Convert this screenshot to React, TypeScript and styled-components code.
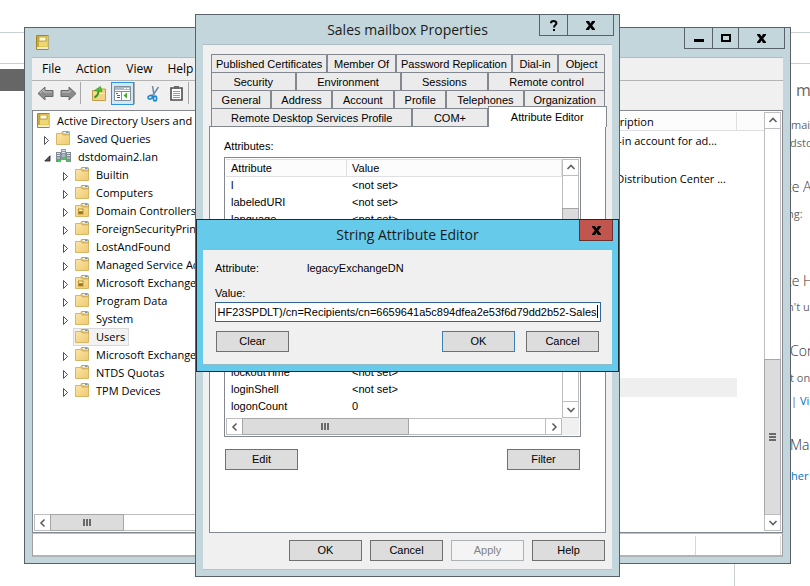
import React, { useEffect, useRef } from 'react';
import styled, { createGlobalStyle, css } from 'styled-components';

const uiFont = '"Open Sans", "Noto Sans", sans-serif';
const dialogFont = '"Liberation Sans", Arial, sans-serif';
const frame = '#c3d6dc';
const frameLine = '#5a616b';
const paneLine = '#828790';

const GlobalStyle = createGlobalStyle`
  * { box-sizing: border-box; }
  body { margin: 0; background: #fff; color: #000; font-family: ${uiFont}; font-size: 11px; }
  button, input { font: inherit; color: inherit; }
  button { padding: 0; border: 0; background: none; }
  svg { display: block; flex: none; }
`;

const Desktop = styled.div`
  position: relative;
  min-height: 100vh;
  overflow: hidden;
`;

/* ---------- web page behind the windows ---------- */

const Page = styled.div`
  display: flex;
  flex-direction: column;
  height: 100vh;
`;

const PageRule = styled.div<{ $height: number }>`
  height: ${(p) => p.$height}px;
  border-bottom: 1px solid #c8d0d4;
`;

const PageBody = styled.div`
  display: flex;
  flex: 1;
  min-height: 0;
  justify-content: space-between;
`;

const PageBar = styled.div`
  width: 60px;
  height: 22px;
  margin-top: 5px;
  background: #666;
`;

const PageColumn = styled.aside`
  width: 76px;
  margin-top: 14px;
  padding-left: 52px;
  border-left: 1px solid #c8d0d4;
  overflow: hidden;
  white-space: nowrap;
  color: #666;
`;

const PageText = styled.p<{ $indent?: number; $gap: number }>`
  margin: ${(p) => p.$gap}px 0 0 ${(p) => p.$indent ?? 0}px;
  font-size: 11px;
  line-height: 18px;
`;

const PageHeading = styled.h3<{ $indent?: number; $gap: number; $large?: boolean }>`
  margin: ${(p) => p.$gap}px 0 0 ${(p) => p.$indent ?? 0}px;
  font-size: ${(p) => (p.$large ? 16 : 14)}px;
  font-weight: ${(p) => (p.$large ? 400 : 300)};
  line-height: 20px;
  color: ${(p) => (p.$large ? '#666' : '#333')};
`;

const PageLink = styled.a`
  color: #0072c6;
  text-decoration: none;
`;

/* ---------- window frames ---------- */

const WindowBox = styled.section`
  position: absolute;
  display: flex;
  flex-direction: column;
  padding: 0 7px 6px;
  border: 1px solid ${frameLine};
  background: ${frame};
`;

const ConsoleWindow = styled(WindowBox)`
  inset: 27px 19px 22px 24px;
`;

const PropertiesWindow = styled(WindowBox)`
  top: 14px;
  left: 195px;
  right: 190px;
  font-family: ${dialogFont};
`;

const EditorWindow = styled(WindowBox)`
  top: 219px;
  left: 196px;
  right: 191px;
  padding: 0 6px 6px;
  border-color: #1d2b33;
  background: #66cbea;
  font-family: ${dialogFont};
`;

const TitleBar = styled.header`
  position: relative;
  display: flex;
  align-items: center;
  height: 29px;
`;

const WindowIcon = styled.span`
  padding-left: 4px;
`;

const Title = styled.h1`
  flex: 1;
  margin: 0;
  font: 400 14px/20px ${uiFont};
  text-align: center;
  color: #1a1a1a;
`;

const Caption = styled.div<{ $red?: boolean }>`
  position: absolute;
  top: 0;
  right: -2px;
  display: flex;
  border: 1px solid ${(p) => (p.$red ? '#6b3030' : frameLine)};
  border-top: 0;
  background: ${(p) => (p.$red ? '#c2564e' : 'transparent')};
`;

const EditorCaption = styled(Caption)`
  right: -1px;
`;

const CaptionButton = styled.button<{ $width: number }>`
  display: grid;
  place-items: center;
  width: ${(p) => p.$width}px;
  height: 20px;
  & + & { border-left: 1px solid ${frameLine}; }
`;

const Client = styled.div`
  display: flex;
  flex: 1;
  flex-direction: column;
  min-height: 0;
  border-top: 1px solid #aebcc4;
  background: #f0f0f0;
`;

/* ---------- management console ---------- */

const MenuBar = styled.nav`
  display: flex;
  height: 23px;
  padding-left: 2px;
  border-bottom: 1px solid #b4b4b4;
`;

const MenuItem = styled.button`
  padding: 0 7px 0 8px;
  font-size: 12px;
  line-height: 22px;
`;

const ToolBar = styled.div`
  display: flex;
  height: 29px;
  padding: 1px 0 0 2px;
`;

const Tool = styled.button<{ $active?: boolean; $width?: number }>`
  display: grid;
  place-items: center;
  width: ${(p) => p.$width ?? 23}px;
  height: 23px;
  ${(p) =>
    p.$active &&
    css`
      border: 1px solid #2c95dc;
      background: #d2e8f6;
    `}
`;

const ToolSeparator = styled.span<{ $gap: number }>`
  width: 1px;
  height: 22px;
  margin-right: ${(p) => p.$gap}px;
  background: #a8a8a8;
`;

const Panes = styled.div`
  display: flex;
  flex: 1;
  gap: 4px;
  min-height: 0;
`;

const Pane = styled.div`
  display: flex;
  min-width: 0;
  padding: 1px;
  border: 1px solid ${paneLine};
  background: #fff;
`;

const TreePane = styled(Pane)`
  flex: 3;
  flex-direction: column;
  justify-content: space-between;
`;

const ListPane = styled(Pane)`
  flex: 7;
`;

const Tree = styled.ul`
  margin: 0;
  padding: 0 0 0 1px;
  list-style: none;
  overflow: hidden;
  white-space: nowrap;
`;

const TreeItem = styled.li<{ $level: number }>`
  display: flex;
  align-items: center;
  height: 18px;
  padding-left: ${(p) => (p.$level === 0 ? 0 : p.$level * 19 - 10)}px;
`;

const Twisty = styled.span`
  display: flex;
  width: 10px;
  padding-top: 3px;
`;

const TreeLabel = styled.span<{ $selected?: boolean }>`
  display: flex;
  align-items: center;
  gap: 7px;
  height: 18px;
  padding: 0 3px 2px 1px;
  border: 1px solid ${(p) => (p.$selected ? '#d9d9d9' : 'transparent')};
  background: ${(p) => (p.$selected ? '#f2f2f2' : 'transparent')};
`;

const AccountTable = styled.table`
  width: 100%;
  border-collapse: separate;
  border-spacing: 0;
  table-layout: fixed;
  white-space: nowrap;
`;

const AccountHead = styled.th<{ $width?: number }>`
  width: ${(p) => (p.$width ? `${p.$width}px` : 'auto')};
  height: 19px;
  padding: 0 6px;
  border-right: 1px solid #dedede;
  border-bottom: 1px solid #dedede;
  background: #fcfcfc;
  font-weight: 400;
  text-align: left;
  &:last-child { border-right: 0; }
`;

const AccountCell = styled.td<{ $selected?: boolean }>`
  height: 19px;
  padding: 0 6px;
  line-height: 17px;
  background: ${(p) => (p.$selected ? '#efefef' : 'transparent')};
  &:last-child { background: transparent; }
`;

const ListArea = styled.div`
  flex: 1;
  min-width: 0;
  overflow: hidden;
`;

const StatusBar = styled.footer`
  display: flex;
  justify-content: flex-end;
  height: 24px;
  padding: 2px 1px 0 0;
  border: 1px solid #a0a0a0;
  border-top-color: #c0c0c8;
  border-bottom: 2px solid #b0b4b8;
  background: #fff;
`;

const StatusPart = styled.span`
  width: 86px;
  border-left: 1px solid #d7d7d7;
  border-right: 1px solid #d7d7d7;
`;

/* ---------- scroll bars ---------- */

const ScrollTrack = styled.div<{ $vertical?: boolean }>`
  display: flex;
  flex: none;
  flex-direction: ${(p) => (p.$vertical ? 'column' : 'row')};
  ${(p) => (p.$vertical ? 'width: 17px;' : 'height: 17px;')}
  border: 1px solid #bdbdbd;
  background: #fff;
`;

const ScrollButton = styled.button<{ $vertical?: boolean; $end?: boolean }>`
  display: grid;
  flex: none;
  place-items: center;
  ${(p) => (p.$vertical ? 'height: 16px;' : 'width: 16px;')}
  border: 0 solid #bdbdbd;
  ${(p) =>
    p.$vertical
      ? p.$end
        ? 'border-top-width: 1px;'
        : 'border-bottom-width: 1px;'
      : p.$end
        ? 'border-left-width: 1px;'
        : 'border-right-width: 1px;'}
`;

const ScrollSpace = styled.span<{ $grow: number }>`
  flex: ${(p) => p.$grow} 1 0;
`;

const ScrollThumb = styled.span<{ $grow: number }>`
  display: grid;
  flex: ${(p) => p.$grow} 1 0;
  place-items: center;
  margin: -1px;
  border: 1px solid #a6a6a6;
  background: #dcdcdc;
`;

/* ---------- dialogs ---------- */

const PropertiesClient = styled(Client)`
  padding: 9px 6px 8px;
  border-bottom: 1px solid #b4c4ca;
`;

const TabRows = styled.div`
  padding: 0 1px 0 2px;
`;

const TabRow = styled.div`
  display: flex;
  height: 18px;
`;

const Tab = styled.button<{ $grow: number; $selected?: boolean }>`
  flex: ${(p) => p.$grow} 1 0;
  min-width: 0;
  border: 1px solid ${paneLine};
  border-bottom: 0;
  background: #ebebeb;
  white-space: nowrap;
  line-height: 18px;
  ${(p) =>
    p.$selected &&
    css`
      z-index: 1;
      margin: -2px -2px -1px 0;
      background: #fff;
    `}
`;

const TabPanel = styled.div`
  padding: 11px 24px 62px 14px;
  border: 1px solid ${paneLine};
  background: #fff;
`;

const FieldName = styled.div`
  height: 16px;
  margin-bottom: 3px;
  line-height: 16px;
`;

const AttributeBox = styled.div`
  display: grid;
  grid-template-columns: 1fr 17px;
  padding: 1px;
  border: 1px solid ${paneLine};
`;

const AttributeTable = styled.table`
  width: 100%;
  padding-bottom: 3px;
  border-collapse: separate;
  border-spacing: 0;
  table-layout: fixed;
`;

const AttributeHead = styled.th<{ $width?: number }>`
  width: ${(p) => (p.$width ? `${p.$width}px` : 'auto')};
  height: 18px;
  padding: 0 5px;
  border: 1px solid #e0e0e0;
  border-left-width: 0;
  background: #fcfcfc;
  font-weight: 400;
  text-align: left;
`;

const AttributeCell = styled.td`
  height: 17px;
  padding: 0 5px;
  line-height: 17px;
`;

const ScrollCorner = styled.span`
  background: #f0f0f0;
`;

const ButtonRow = styled.div<{ $top: number; $gap?: number; $align?: string }>`
  display: flex;
  justify-content: ${(p) => p.$align ?? 'space-between'};
  gap: ${(p) => p.$gap ?? 0}px;
  margin-top: ${(p) => p.$top}px;
  padding: 0 1px;
`;

const PushButton = styled.button<{ $primary?: boolean }>`
  width: 73px;
  height: 21px;
  border: 1px solid ${(p) => (p.$primary ? '#3c7fb1' : '#707070')};
  background: #ddd;
  line-height: 19px;
  &:disabled {
    border-color: #adb2b5;
    background: #f4f4f4;
    color: #838383;
  }
`;

const EditorClient = styled(Client)`
  padding: 10px 11px 12px 12px;
  border: 1px solid #8db9cb;
  border-width: 1px 0;
`;

const EditorFields = styled.form`
  display: flex;
  flex-direction: column;
`;

const EditorLine = styled.div`
  display: flex;
  margin-bottom: 9px;
  line-height: 16px;
`;

const AttributeLabel = styled.span`
  width: 92px;
`;

const ValueLabel = styled.label`
  line-height: 17px;
`;

const ValueBox = styled.div`
  position: relative;
  display: flex;
`;

const ValueInput = styled.input`
  width: 100%;
  height: 20px;
  padding: 0 3px 0 2px;
  border: 1px solid #2f6597;
  border-radius: 0;
  outline: 0;
  background: #fff;
  caret-color: transparent;
`;

const Caret = styled.span`
  position: absolute;
  top: 3px;
  right: 3px;
  width: 1px;
  height: 13px;
  background: #000;
`;

const EditorButtons = styled(ButtonRow)`
  padding-right: 2px;
`;

const RightButtons = styled.div`
  display: flex;
  gap: 11px;
`;

/* ---------- drawings ---------- */

const CloseGlyph = () => (
  <svg width="9" height="9" viewBox="0 0 9 9">
    <path d="M0 0H3L4.500 2.500L6 0H9V1L6.200 4.500L9 8V9H6L4.500 6.500L3 9H0V8L2.800 4.500L0 1Z" fill="#000" />
  </svg>
);

const MinimizeGlyph = () => (
  <svg width="10" height="9" viewBox="0 0 10 9">
    <path d="M0 5H10V8H0Z" fill="#000" />
  </svg>
);

const MaximizeGlyph = () => (
  <svg width="10" height="8" viewBox="0 0 10 8">
    <path d="M1 1H9V7H1Z" fill="none" stroke="#000" strokeWidth="2" />
  </svg>
);

const HelpGlyph = () => (
  <svg width="8" height="11" viewBox="0 0 8 11">
    <path d="M1 3.2C1 .4 6.4.4 6.4 3.2C6.4 5 4 5 4 7.4" fill="none" stroke="#000" strokeWidth="2" />
    <path d="M3 9H5V11H3Z" fill="#000" />
  </svg>
);

const arrows = {
  up: 'M1.5 6L5 2.5L8.5 6',
  down: 'M1.5 3L5 6.5L8.5 3',
  left: 'M6.5 1.5L3 5L6.5 8.5',
  right: 'M3.5 1.5L7 5L3.5 8.5',
};

const Chevron = ({ to }: { to: keyof typeof arrows }) => (
  <svg width="10" height="10" viewBox="0 0 10 10">
    <path d={arrows[to]} fill="none" stroke="#606060" strokeWidth="1.6" />
  </svg>
);

const Grip = ({ vertical }: { vertical?: boolean }) => (
  <svg width="8" height="8" viewBox="0 0 8 8" shapeRendering="crispEdges">
    <path d={vertical ? 'M0 0H7V2H0ZM0 3H7V5H0ZM0 6H7V8H0Z' : 'M0 0H2V7H0ZM3 0H5V7H3ZM6 0H8V7H6Z'} fill="#6a6a6a" />
  </svg>
);

const BookIcon = () => (
  <svg width="13" height="15" viewBox="0 0 13 15">
    <path d="M0 1Q0 0 1 0H12.500V15H1Q0 15 0 14Z" fill="#a5862a" />
    <path d="M1 1H12V12H1Z" fill="#e3c95c" />
    <path d="M1 1H3V12H1Z" fill="#c9a83c" />
    <path d="M1 12H12V14H1Z" fill="#f3ecc8" />
    <path d="M3 2H10V6H3Z" fill="#fdf8dc" stroke="#b89a3a" strokeWidth=".8" />
    <path d="M3 7H11V11H3Z" fill="#edd874" />
  </svg>
);

const FolderIcon = ({ unit }: { unit?: boolean }) => (
  <svg width="14" height="14" viewBox="0 0 14 14">
    <defs>
      <linearGradient id="folder" x1="0" y1="0" x2="1" y2="1">
        <stop offset="0" stopColor="#fbe6a6" />
        <stop offset="1" stopColor="#efc970" />
      </linearGradient>
    </defs>
    <path d="M6 3V1.500Q6 .5 7 .5H12.500Q13.500 .5 13.500 1.500V4Z" fill="#f3dc9a" stroke="#c7a04c" />
    <path d="M8 1H10V2H8Z" fill="#fff" />
    <path d="M10 1H12.500V2H10Z" fill="#5b9bc8" />
    <path d="M.5 2.500H5.500L7 4H13.500V13.500H.5Z" fill="url(#folder)" stroke="#d9b566" />
    {unit && (
      <>
        <path d="M3 5.500H8.500V11.500H3Z" fill="#b8912a" />
        <path d="M4 6.500H7.500V8H4Z" fill="#fff3b0" />
        <path d="M4 9H7.500V10.500H4Z" fill="#8f6e16" />
      </>
    )}
  </svg>
);

const DomainIcon = () => (
  <svg width="15" height="14" viewBox="0 0 15 14">
    <path d="M5 0H10V11H5Z" fill="#8b979f" />
    <path d="M6 1H9V2H6ZM6 3H9V4H6Z" fill="#e4ecf0" />
    <path d="M0 3H5V13H0ZM10 3H15V13H10Z" fill="#7d8a93" />
    <path d="M1 4H4V5H1ZM1 6H4V7H1ZM11 4H14V5H11ZM11 6H14V7H11Z" fill="#dfe8ec" />
    <path d="M1 8H4V10H1ZM11 8H14V10H11ZM6 5H9V8H6Z" fill="#aab5bc" />
    <path d="M2 11H5V13H2ZM7 9H9V11H7ZM11 11H14V13H11Z" fill="#35d435" />
  </svg>
);

const ClosedTwisty = () => (
  <svg width="6" height="9" viewBox="0 0 6 9">
    <path d="M.5 .5V8.500L4.500 4.500Z" fill="#fff" stroke="#404040" strokeWidth=".9" />
  </svg>
);

const OpenTwisty = () => (
  <svg width="7" height="7" viewBox="0 0 7 7">
    <path d="M6 .8V6H.8Z" fill="#595959" stroke="#262626" strokeWidth=".9" />
  </svg>
);

const ArrowIcon = ({ forward }: { forward?: boolean }) => (
  <svg width="17" height="15" viewBox="0 0 17 15">
    <path
      d={forward ? 'M16 7.500L9 1V4.500H1V10.500H9V14Z' : 'M1 7.500L8 1V4.500H16V10.500H8V14Z'}
      fill="#8c8c8c"
      stroke="#6a6a6a"
      strokeLinejoin="round"
    />
    <path d={forward ? 'M2 6H10V4' : 'M3 7L7 3.500V6H15'} fill="none" stroke="#c4c4c4" />
  </svg>
);

const FolderUpIcon = () => (
  <svg width="16" height="15" viewBox="0 0 16 15">
    <path d="M1.500 4.500H6L7 3H14.500V14.500H1.500Z" fill="#f3d287" stroke="#c39c46" />
    <path d="M2 7H14V8H2Z" fill="#fbe9b4" />
    <path d="M3.500 11.500Q7.500 9.500 7.500 5" fill="none" stroke="#2f9e1c" strokeWidth="2" />
    <path d="M3.500 4.500L9.500 .5L11 5.500Z" fill="#49c22c" stroke="#2c8c1a" strokeWidth=".6" />
  </svg>
);

const ConsoleTreeIcon = () => (
  <svg width="17" height="15" viewBox="0 0 17 15">
    <path d="M.5 .5H16.500V14.500H.5Z" fill="#fff" stroke="#82909c" />
    <path d="M1 1H16V4H1Z" fill="#aebbc6" />
    <path d="M10 2H12V3H10ZM13 2H15V3H13Z" fill="#fff" />
    <path d="M0 5.500H17" stroke="#82909c" />
    <path d="M7.500 6V14" stroke="#82909c" />
    <path d="M2 7H4V8H2ZM3 9H6V10H3ZM3 11H6V12H3Z" fill="#2e6db5" />
    <path d="M13 6.500V12.500L9.500 9.500Z" fill="#3bb026" />
  </svg>
);

const ScissorsIcon = () => (
  <svg width="13" height="16" viewBox="0 0 13 16">
    <path d="M5.500 0L7 9M11.500 1L5 10.500" fill="none" stroke="#6b8ba3" strokeWidth="1.500" />
    <ellipse cx="3.300" cy="11.300" rx="2.300" ry="1.700" fill="none" stroke="#1d86d1" strokeWidth="1.600" transform="rotate(-25 3.300 11.300)" />
    <ellipse cx="8" cy="12.500" rx="1.600" ry="2.400" fill="none" stroke="#1d86d1" strokeWidth="1.600" />
  </svg>
);

const ClipboardIcon = () => (
  <svg width="13" height="15" viewBox="0 0 13 15">
    <path d="M1 2H12V14H1Z" fill="#fff" stroke="#4d4d4d" strokeWidth="1.600" />
    <path d="M4 0H9V3H4Z" fill="#6a6a6a" />
    <path d="M3 5.500H10M3 7.500H10M3 9.500H10M3 11.500H10" stroke="#9a9a9a" />
  </svg>
);

/* ---------- composed parts ---------- */

type BarProps = { vertical?: boolean; before?: number; thumb: number; after: number };

const ScrollBar = ({ vertical, before = 0, thumb, after }: BarProps) => (
  <ScrollTrack $vertical={vertical}>
    <ScrollButton type="button" $vertical={vertical} aria-label={vertical ? 'Scroll up' : 'Scroll left'}>
      <Chevron to={vertical ? 'up' : 'left'} />
    </ScrollButton>
    {before > 0 && <ScrollSpace $grow={before} />}
    <ScrollThumb $grow={thumb}>
      <Grip vertical={vertical} />
    </ScrollThumb>
    {after > 0 && <ScrollSpace $grow={after} />}
    <ScrollButton type="button" $vertical={vertical} $end aria-label={vertical ? 'Scroll down' : 'Scroll right'}>
      <Chevron to={vertical ? 'down' : 'right'} />
    </ScrollButton>
  </ScrollTrack>
);

type Node = { label: string; level: number; icon?: 'book' | 'domain' | 'unit'; open?: boolean; leaf?: boolean; selected?: boolean };

const nodes: Node[] = [
  { label: 'Active Directory Users and', level: 0, icon: 'book' },
  { label: 'Saved Queries', level: 1 },
  { label: 'dstdomain2.lan', level: 1, icon: 'domain', open: true },
  { label: 'Builtin', level: 2 },
  { label: 'Computers', level: 2 },
  { label: 'Domain Controllers', level: 2, icon: 'unit' },
  { label: 'ForeignSecurityPrincipals', level: 2 },
  { label: 'LostAndFound', level: 2 },
  { label: 'Managed Service Accounts', level: 2 },
  { label: 'Microsoft Exchange', level: 2, icon: 'unit' },
  { label: 'Program Data', level: 2 },
  { label: 'System', level: 2 },
  { label: 'Users', level: 2, leaf: true, selected: true },
  { label: 'Microsoft Exchange', level: 2 },
  { label: 'NTDS Quotas', level: 2 },
  { label: 'TPM Devices', level: 2 },
];

const NodeIcon = ({ icon }: { icon?: Node['icon'] }) =>
  icon === 'book' ? <BookIcon /> : icon === 'domain' ? <DomainIcon /> : <FolderIcon unit={icon === 'unit'} />;

const descriptions = ['Built-in account for ad...', '', 'Key Distribution Center ...', '', '', '', '', '', '', '', '', '', '', ''];
const selectedAccount = 13;

const tabRows: [string, number][][] = [
  [['Published Certificates', 117], ['Member Of', 68], ['Password Replication', 117], ['Dial-in', 45], ['Object', 46]],
  [['Security', 84], ['Environment', 105], ['Sessions', 87], ['Remote control', 117]],
  [['General', 60], ['Address', 60], ['Account', 62], ['Profile', 52], ['Telephones', 78], ['Organization', 81]],
  [['Remote Desktop Services Profile', 202], ['COM+', 74], ['Attribute Editor', 119]],
];

const attributes: [string, string][] = [
  ['l', '<not set>'],
  ['labeledURI', '<not set>'],
  ['language', '<not set>'],
  ...Array.from({ length: 8 }, (): [string, string] => ['', '']),
  ['lockoutTime', '<not set>'],
  ['loginShell', '<not set>'],
  ['logonCount', '0'],
];

const Console = () => (
  <ConsoleWindow>
    <TitleBar>
      <WindowIcon><BookIcon /></WindowIcon>
      <Caption>
        <CaptionButton $width={27} aria-label="Minimize"><MinimizeGlyph /></CaptionButton>
        <CaptionButton $width={26} aria-label="Maximize"><MaximizeGlyph /></CaptionButton>
        <CaptionButton $width={46} aria-label="Close"><CloseGlyph /></CaptionButton>
      </Caption>
    </TitleBar>
    <Client>
      <MenuBar>
        {['File', 'Action', 'View', 'Help'].map((m) => (
          <MenuItem key={m} type="button">{m}</MenuItem>
        ))}
      </MenuBar>
      <ToolBar>
        <Tool aria-label="Back"><ArrowIcon /></Tool>
        <Tool aria-label="Forward"><ArrowIcon forward /></Tool>
        <ToolSeparator $gap={6} />
        <Tool $width={24} aria-label="Up one level"><FolderUpIcon /></Tool>
        <Tool $active aria-label="Show console tree"><ConsoleTreeIcon /></Tool>
        <ToolSeparator $gap={7} />
        <Tool aria-label="Cut"><ScissorsIcon /></Tool>
        <Tool aria-label="Copy"><ClipboardIcon /></Tool>
        <ToolSeparator $gap={0} />
      </ToolBar>
      <Panes>
        <TreePane>
          <Tree>
            {nodes.map((n, i) => (
              <TreeItem key={i} $level={n.level}>
                {n.level > 0 && <Twisty>{n.leaf ? null : n.open ? <OpenTwisty /> : <ClosedTwisty />}</Twisty>}
                <TreeLabel $selected={n.selected}>
                  <NodeIcon icon={n.icon} />
                  {n.label}
                </TreeLabel>
              </TreeItem>
            ))}
          </Tree>
          <ScrollBar thumb={73} after={117} />
        </TreePane>
        <ListPane>
          <ListArea>
            <AccountTable>
              <thead>
                <tr>
                  <AccountHead />
                  <AccountHead $width={148}>Description</AccountHead>
                  <AccountHead $width={27} />
                </tr>
              </thead>
              <tbody>
                {descriptions.map((d, i) => (
                  <tr key={i}>
                    <AccountCell $selected={i === selectedAccount} />
                    <AccountCell $selected={i === selectedAccount}>{d}</AccountCell>
                    <AccountCell />
                  </tr>
                ))}
              </tbody>
            </AccountTable>
          </ListArea>
          <ScrollBar vertical before={230} thumb={154} after={0} />
        </ListPane>
      </Panes>
      <StatusBar>
        <StatusPart />
      </StatusBar>
    </Client>
  </ConsoleWindow>
);

const Properties = () => (
  <PropertiesWindow role="dialog" aria-label="Sales mailbox Properties">
    <TitleBar>
      <Title>Sales mailbox Properties</Title>
      <Caption>
        <CaptionButton $width={27} aria-label="Help"><HelpGlyph /></CaptionButton>
        <CaptionButton $width={46} aria-label="Close"><CloseGlyph /></CaptionButton>
      </Caption>
    </TitleBar>
    <PropertiesClient>
      <TabRows role="tablist">
        {tabRows.map((row, i) => (
          <TabRow key={i}>
            {row.map(([name, grow]) => (
              <Tab
                key={name}
                type="button"
                role="tab"
                $grow={grow}
                $selected={name === 'Attribute Editor'}
                aria-selected={name === 'Attribute Editor'}
              >
                {name}
              </Tab>
            ))}
          </TabRow>
        ))}
      </TabRows>
      <TabPanel role="tabpanel">
        <FieldName>Attributes:</FieldName>
        <AttributeBox>
          <AttributeTable>
            <thead>
              <tr>
                <AttributeHead $width={121}>Attribute</AttributeHead>
                <AttributeHead>Value</AttributeHead>
              </tr>
            </thead>
            <tbody>
              {attributes.map(([name, value], i) => (
                <tr key={i}>
                  <AttributeCell>{name}</AttributeCell>
                  <AttributeCell>{value}</AttributeCell>
                </tr>
              ))}
            </tbody>
          </AttributeTable>
          <ScrollBar vertical before={33} thumb={60} after={132} />
          <ScrollBar thumb={164} after={137} />
          <ScrollCorner />
        </AttributeBox>
        <ButtonRow $top={12}>
          <PushButton type="button">Edit</PushButton>
          <PushButton type="button">Filter</PushButton>
        </ButtonRow>
      </TabPanel>
      <ButtonRow $top={7} $gap={8} $align="flex-end">
        <PushButton type="button">OK</PushButton>
        <PushButton type="button">Cancel</PushButton>
        <PushButton type="button" disabled>Apply</PushButton>
        <PushButton type="button">Help</PushButton>
      </ButtonRow>
    </PropertiesClient>
  </PropertiesWindow>
);

const StringEditor = () => {
  const field = useRef<HTMLInputElement>(null);

  useEffect(() => {
    const el = field.current;
    if (!el) return;
    el.focus();
    el.setSelectionRange(el.value.length, el.value.length);
    el.scrollLeft = el.scrollWidth;
  }, []);

  return (
    <EditorWindow role="dialog" aria-label="String Attribute Editor">
      <TitleBar>
        <Title>String Attribute Editor</Title>
        <EditorCaption $red>
          <CaptionButton $width={32} aria-label="Close"><CloseGlyph /></CaptionButton>
        </EditorCaption>
      </TitleBar>
      <EditorClient>
        <EditorFields onSubmit={(e) => e.preventDefault()}>
          <EditorLine>
            <AttributeLabel>Attribute:</AttributeLabel>
            <span>legacyExchangeDN</span>
          </EditorLine>
          <ValueLabel htmlFor="attribute-value">Value:</ValueLabel>
          <ValueBox>
            <ValueInput
              id="attribute-value"
              ref={field}
              defaultValue="OHF23SPDLT)/cn=Recipients/cn=6659641a5c894dfea2e53f6d79dd2b52-Sales"
            />
            <Caret />
          </ValueBox>
          <EditorButtons $top={9}>
            <PushButton type="button">Clear</PushButton>
            <RightButtons>
              <PushButton type="submit" $primary>OK</PushButton>
              <PushButton type="button">Cancel</PushButton>
            </RightButtons>
          </EditorButtons>
        </EditorFields>
      </EditorClient>
    </EditorWindow>
  );
};

export default function App() {
  return (
    <>
      <GlobalStyle />
      <Desktop>
        <Page>
          <PageRule $height={33} />
          <PageRule $height={31} />
          <PageBody>
            <PageBar />
            <PageColumn>
              <PageHeading $large $gap={2} $indent={9}>m</PageHeading>
              <PageText $gap={16} $indent={4}>mai</PageText>
              <PageText $gap={0} $indent={3}>dstd</PageText>
              <PageHeading $gap={25}>te A</PageHeading>
              <PageText $gap={8}>ng:</PageText>
              <PageHeading $gap={48}>te H</PageHeading>
              <PageText $gap={7}>n't u</PageText>
              <PageHeading $gap={25} $indent={3}>Con</PageHeading>
              <PageText $gap={8} $indent={3}>t on</PageText>
              <PageText $gap={5} $indent={4}>| <PageLink href="#view">Vie</PageLink></PageText>
              <PageHeading $gap={25} $indent={3}>Ma</PageHeading>
              <PageText $gap={12} $indent={4}><PageLink href="#other">her</PageLink></PageText>
            </PageColumn>
          </PageBody>
        </Page>
        <Console />
        <Properties />
        <StringEditor />
      </Desktop>
    </>
  );
}
